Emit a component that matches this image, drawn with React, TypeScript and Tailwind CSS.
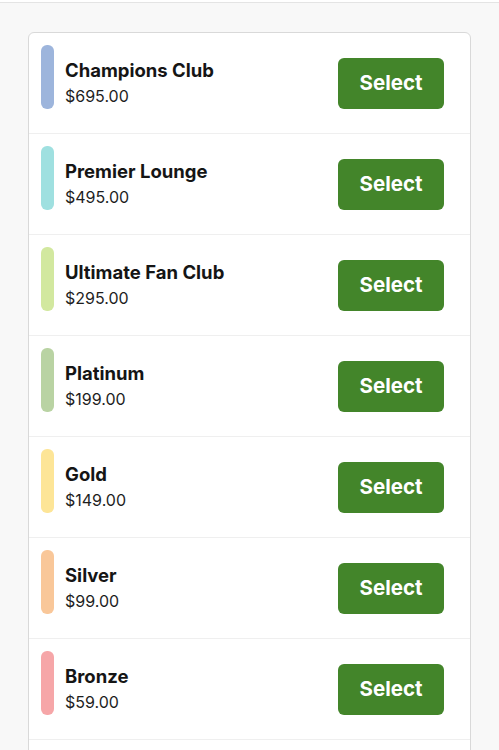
const tiers = [
  { name: "Champions Club", price: "$695.00", color: "bg-[#9db5dc]" },
  { name: "Premier Lounge", price: "$495.00", color: "bg-[#9fe0e0]" },
  { name: "Ultimate Fan Club", price: "$295.00", color: "bg-[#d2e89f]" },
  { name: "Platinum", price: "$199.00", color: "bg-[#b9d3a3]" },
  { name: "Gold", price: "$149.00", color: "bg-[#fde597]" },
  { name: "Silver", price: "$99.00", color: "bg-[#f9c799]" },
  { name: "Bronze", price: "$59.00", color: "bg-[#f6a6a8]" },
];

function TierRow({ name, price, color }: { name: string; price: string; color: string }) {
  return (
    <div className="flex h-[101px] shrink-0 items-center justify-between border-b border-[#efefef] pl-[12px] pr-[26px]">
      <div className="flex items-start gap-[11px] self-start pt-3">
        <div className={`h-16 w-[13px] rounded-md ${color}`} />
        <div className="pt-[13px]">
          <div className="text-[18.5px] font-bold leading-6 text-[#151515]">{name}</div>
          <div className="mt-[2px] text-[16px] leading-6 text-[#1e1e1e]">{price}</div>
        </div>
      </div>
      <button className="mt-[1px] flex h-[51px] w-[106px] items-center justify-center rounded-md bg-[#43852a] text-[20.5px] font-bold text-white">
        Select
      </button>
    </div>
  );
}

export default function App() {
  return (
    <div
      className="h-[750px] overflow-hidden bg-[#f8f8f8]"
      style={{ fontFamily: "Inter, 'Noto Sans', sans-serif" }}
    >
      <div className="h-[3px] border-b border-[#e4e4e4] bg-white" />
      <div className="px-[28px] pt-[29px]">
        <div className="flex flex-col overflow-hidden rounded-md border border-[#d9d9d9] bg-white">
          {tiers.map((t) => (
            <TierRow key={t.name} {...t} />
          ))}
          <div className="h-[60px]" />
        </div>
      </div>
    </div>
  );
}
